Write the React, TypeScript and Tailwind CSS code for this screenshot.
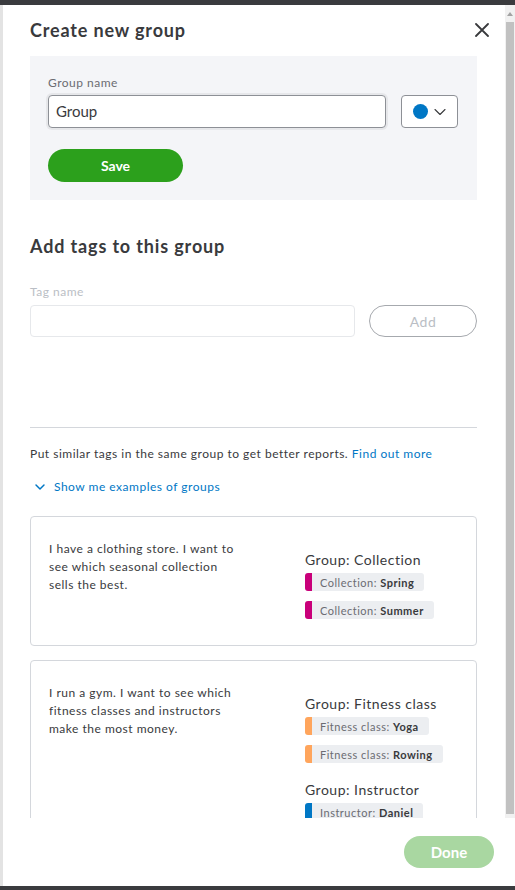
import { ChevronDown } from 'lucide-react'

const font = { fontFamily: 'Lato, "Noto Sans", sans-serif' }

type TagProps = { color: string; label: string; value: string }

function Tag({ color, label, value }: TagProps) {
  return (
    <div className="flex h-[18px] w-fit items-stretch">
      <div className={`w-[7px] rounded-l-[3px] ${color}`} />
      <div className="flex items-center rounded-r-[3px] bg-[#eceef1] pl-[8px] pr-[10px] text-[11px] leading-none text-[#6b6c72]">
        {label}:&nbsp;<span className="font-bold text-[#393a3d]">{value}</span>
      </div>
    </div>
  )
}

function GroupLabel({ children, className = '' }: { children: string; className?: string }) {
  return <div className={`text-[14px] leading-[18px] text-[#393a3d] ${className}`}>{children}</div>
}

function CloseIcon() {
  return (
    <svg width="14" height="14" viewBox="0 0 14 14" className="text-[#393a3d]">
      <path d="M1 1 L13 13 M13 1 L1 13" stroke="currentColor" strokeWidth="1.8" strokeLinecap="round" />
    </svg>
  )
}

function Scrollbar() {
  return (
    <div className="flex w-[10px] flex-col bg-[#f1f1f1]">
      <div className="flex h-[17px] items-center justify-center">
        <div className="h-0 w-0 border-x-[3px] border-b-[4px] border-x-transparent border-b-[#a3a3a3]" />
      </div>
      <div className="mx-[1px] flex-1 bg-[#c1c1c1]" />
      <div className="h-[4px]" />
    </div>
  )
}

export default function App() {
  return (
    <div className="flex h-[890px] w-[515px] flex-col overflow-hidden bg-white tracking-[0.5px]" style={font}>
      <div className="h-[5px] shrink-0 bg-[#3a3b3e]" />
      <div className="flex min-h-0 flex-1">
        <div className="w-[3px] shrink-0 bg-[#e3e3e3]" />
        <div className="flex min-w-0 flex-1 flex-col">
          <div className="flex h-[813px] shrink-0 overflow-hidden">
            <div className="min-w-0 flex-1 pl-[27px] pr-[28px]">
              <div className="mt-[13px] flex items-center justify-between">
                <h1 className="text-[18px] font-bold leading-[24px] tracking-[0.85px] text-[#393a3d]">
                  Create new group
                </h1>
                <button type="button" className="mr-[-12px] p-0">
                  <CloseIcon />
                </button>
              </div>

              <div className="mt-[14px] bg-[#f4f5f8] px-[18px] pb-[18px] pt-[19px]">
                <div className="text-[12px] leading-[16px] text-[#6b6c72]">Group name</div>
                <div className="mt-[4px] flex gap-[15px]">
                  <div className="flex h-[33px] w-[338px] items-center rounded-[4px] border border-[#8d9096] bg-white pl-[7px] text-[15px] tracking-normal text-[#393a3d] shadow-[0_0_0_2px_#e6e7ea]">
                    Group
                  </div>
                  <div className="flex h-[33px] w-[57px] items-center justify-between rounded-[4px] border border-[#8d9096] bg-white pl-[11px] pr-[7px]">
                    <div className="h-[15px] w-[15px] rounded-full bg-[#0077c5]" />
                    <ChevronDown size={20} strokeWidth={1.3} className="text-[#393a3d]" />
                  </div>
                </div>
                <button
                  type="button"
                  className="mt-[21px] h-[33px] w-[135px] rounded-full bg-[#2ca01c] text-[14px] font-bold tracking-normal text-white"
                >
                  Save
                </button>
              </div>

              <h2 className="mt-[34px] text-[18px] font-bold leading-[24px] tracking-[0.85px] text-[#393a3d]">
                Add tags to this group
              </h2>
              <div className="mt-[26px] text-[12px] leading-[16px] text-[#babec5]">Tag name</div>
              <div className="mt-[5px] flex gap-[14px]">
                <div className="h-[32px] w-[325px] rounded-[4px] border border-[#e6e8eb] bg-white" />
                <button
                  type="button"
                  className="h-[32px] flex-1 rounded-full border border-[#a6a9ae] text-[14px] text-[#babec5]"
                >
                  Add
                </button>
              </div>

              <div className="mt-[90px] h-px bg-[#d4d7dc]" />

              <p className="mt-[18px] text-[12px] leading-[16px] text-[#393a3d]">
                Put similar tags in the same group to get better reports.{' '}
                <span className="text-[#0077c5]">Find out more</span>
              </p>
              <div className="mt-[17px] flex items-center gap-[6px] pl-[2px] text-[12px] leading-[16px] text-[#0077c5]">
                <ChevronDown size={16} strokeWidth={2.2} />
                <span>Show me examples of groups</span>
              </div>

              <div className="mt-[21px] flex h-[130px] rounded-[4px] border border-[#d4d7dc] pl-[18px] pt-[23px]">
                <p className="w-[188px] text-[12px] leading-[18px] text-[#393a3d]">
                  I have a clothing store. I want to see which seasonal collection sells the best.
                </p>
                <div className="ml-[68px] mt-[11px] flex flex-col">
                  <GroupLabel>Group: Collection</GroupLabel>
                  <div className="mt-[4px] flex flex-col gap-[10px]">
                    <Tag color="bg-[#c9007a]" label="Collection" value="Spring" />
                    <Tag color="bg-[#c9007a]" label="Collection" value="Summer" />
                  </div>
                </div>
              </div>

              <div className="mt-[14px] flex h-[200px] rounded-[4px] border border-[#d4d7dc] pl-[18px] pt-[23px]">
                <p className="w-[188px] text-[12px] leading-[18px] text-[#393a3d]">
                  I run a gym. I want to see which fitness classes and instructors make the most money.
                </p>
                <div className="ml-[68px] mt-[11px] flex flex-col">
                  <GroupLabel>Group: Fitness class</GroupLabel>
                  <div className="mt-[4px] flex flex-col gap-[10px]">
                    <Tag color="bg-[#ffa55c]" label="Fitness class" value="Yoga" />
                    <Tag color="bg-[#ffa55c]" label="Fitness class" value="Rowing" />
                  </div>
                  <GroupLabel className="mt-[18px]">Group: Instructor</GroupLabel>
                  <div className="mt-[4px] flex flex-col gap-[10px]">
                    <Tag color="bg-[#0077c5]" label="Instructor" value="Daniel" />
                  </div>
                </div>
              </div>
            </div>
            <Scrollbar />
          </div>

          <div className="flex flex-1 justify-end pr-[21px] pt-[18px]">
            <button
              type="button"
              className="h-[32px] w-[90px] rounded-full bg-[#a9d7a1] text-[15px] font-bold tracking-normal text-white"
            >
              Done
            </button>
          </div>
        </div>
      </div>
      <div className="h-[4px] shrink-0 bg-[#3a3b3e]" />
    </div>
  )
}
